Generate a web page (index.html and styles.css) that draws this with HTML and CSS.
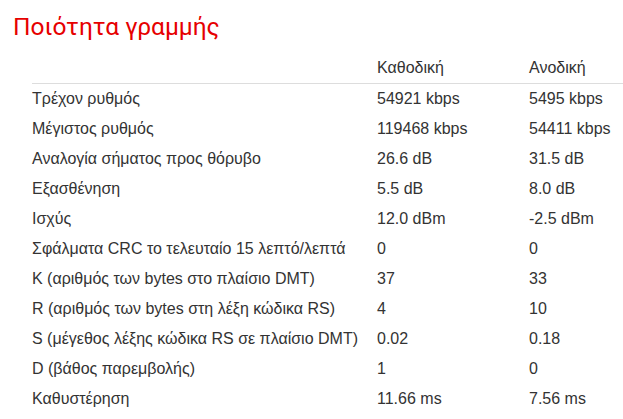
FILE: index.html
```html
<!DOCTYPE html>
<html lang="el">
<head>
<meta charset="utf-8">
<link rel="stylesheet" href="styles.css">
</head>
<body>
<h1 class="title">Ποιότητα γραμμής</h1>
<table class="stats">
<thead>
<tr><th></th><th>Καθοδική</th><th>Ανοδική</th></tr>
</thead>
<tbody>
<tr><td>Τρέχον ρυθμός</td><td>54921 kbps</td><td>5495 kbps</td></tr>
<tr><td>Μέγιστος ρυθμός</td><td>119468 kbps</td><td>54411 kbps</td></tr>
<tr><td>Αναλογία σήματος προς θόρυβο</td><td>26.6 dB</td><td>31.5 dB</td></tr>
<tr><td>Εξασθένηση</td><td>5.5 dB</td><td>8.0 dB</td></tr>
<tr><td>Ισχύς</td><td>12.0 dBm</td><td>-2.5 dBm</td></tr>
<tr><td>Σφάλματα CRC το τελευταίο 15 λεπτό/λεπτά</td><td>0</td><td>0</td></tr>
<tr><td>K (αριθμός των bytes στο πλαίσιο DMT)</td><td>37</td><td>33</td></tr>
<tr><td>R (αριθμός των bytes στη λέξη κώδικα RS)</td><td>4</td><td>10</td></tr>
<tr><td>S (μέγεθος λέξης κώδικα RS σε πλαίσιο DMT)</td><td>0.02</td><td>0.18</td></tr>
<tr><td>D (βάθος παρεμβολής)</td><td>1</td><td>0</td></tr>
<tr><td>Καθυστέρηση</td><td>11.66 ms</td><td>7.56 ms</td></tr>
</tbody>
</table>
</body>
</html>
```
FILE: styles.css
```css
html, body {
  margin: 0;
  padding: 0;
  background: #fff;
}
body {
  font-family: "Liberation Sans", Arial, sans-serif;
  color: #333;
  font-size: 16px;
}
.title {
  margin: 0;
  padding: 9px 0 0 13px;
  font-family: Roboto, sans-serif;
  font-weight: 400;
  font-size: 24.5px;
  line-height: 36px;
  color: #e60000;
}
.stats {
  margin: 9px 0 0 32px;
  width: 591px;
  border-collapse: collapse;
}
.stats th, .stats td {
  text-align: left;
  font-weight: normal;
  padding: 5px 0;
  line-height: 20px;
}
.stats th {
  padding: 4px 0 5px;
  border-bottom: 1px solid #ddd;
}
.stats th:nth-child(1), .stats td:nth-child(1) { width: 345px; }
.stats th:nth-child(2), .stats td:nth-child(2) { width: 152px; }
```
